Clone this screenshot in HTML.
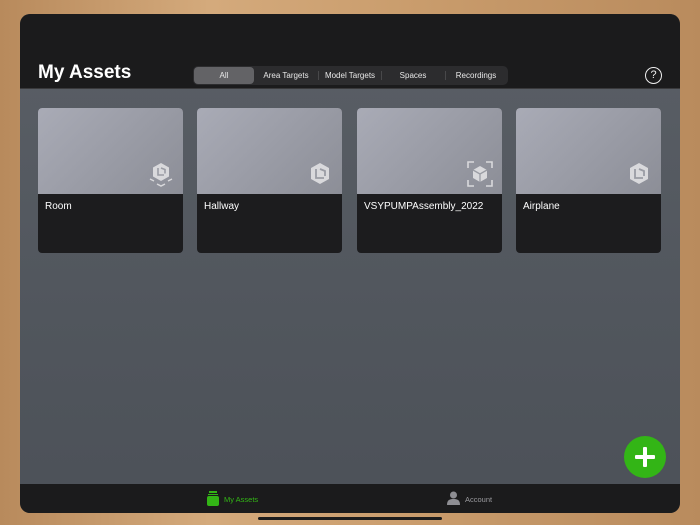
<!DOCTYPE html>
<html><head><style>
*{margin:0;padding:0;box-sizing:border-box}
body{width:700px;height:525px;overflow:hidden;background:linear-gradient(90deg,#b88a5c,#d4aa7c 30%,#c99c6c 60%,#b98b5d);font-family:"Liberation Sans",sans-serif;position:relative}
.panel{position:absolute;left:20px;top:14px;width:660px;height:499px;border-radius:10px;overflow:hidden;background:linear-gradient(180deg,#5a5f66,#51565d 60%,#4c5158)}
.hdr{position:absolute;left:0;top:0;width:660px;height:75px;background:#1b1b1c;border-bottom:1px solid #3a3a3c}
.title{position:absolute;left:18px;top:48px;color:#fff;font-weight:bold;font-size:19px}
.seg{position:absolute;left:173px;top:52px;width:315px;height:19px;background:#2c2c2e;border-radius:5px;font-size:8px;color:#e8e8e8}
.seg span{position:absolute;top:0;height:19px;line-height:19px;text-align:center}
.seg .sel{background:#636366;border-radius:4px;top:1px;height:17px;line-height:17px}
.sep{position:absolute;top:5px;width:1px;height:9px;background:#48484a}
.help{position:absolute;left:625px;top:53px;width:17px;height:17px;border:1.5px solid #eee;border-radius:50%;color:#eee;font-size:11px;text-align:center;line-height:14px}
.card{position:absolute;top:94px;width:145px;height:145px;border-radius:4px;overflow:hidden;background:#1c1c1e}
.card .img{height:86px;background:linear-gradient(135deg,#a9abb6,#8c8e97)}
.card .lbl{color:#fff;font-size:10px;position:absolute;left:7px;top:93px}
.card svg{position:absolute;right:8px;top:52px}
.tab{position:absolute;left:0;top:470px;width:660px;height:29px;background:#1b1b1c;font-size:7.5px}
.fab{position:absolute;left:604px;top:422px;width:42px;height:42px;border-radius:50%;background:#33b516}
.fab:before,.fab:after{content:"";position:absolute;background:#fff;border-radius:1px}
.fab:before{left:11px;top:19px;width:20px;height:4px}
.fab:after{left:19px;top:11px;width:4px;height:20px}
.home{position:absolute;left:258px;top:517px;width:184px;height:3px;border-radius:2px;background:#1c1c1c}
</style></head><body>
<div class="panel">
<div class="hdr">
<div class="title">My Assets</div>
<div class="seg">
<span class="sel" style="left:1px;width:60px">All</span>
<span style="left:62px;width:62px">Area Targets</span>
<div class="sep" style="left:125px"></div>
<span style="left:126px;width:62px">Model Targets</span>
<div class="sep" style="left:188px"></div>
<span style="left:189px;width:62px">Spaces</span>
<div class="sep" style="left:252px"></div>
<span style="left:252px;width:62px">Recordings</span>
</div>
<div class="help">?</div>
</div>
<div class="card" style="left:18px"><div class="img"></div><div class="lbl">Room</div>
<svg width="28" height="28" viewBox="0 0 28 28"><path d="M14 3l8 4.5v9L14 21l-8-4.5v-9z" fill="#d9d9dc"/><path d="M11 8v7h6M14 8l4 1.5v4" stroke="#9a9ca4" stroke-width="1.6" fill="none"/><path d="M3 19l4 2M25 19l-4 2M10 24l4 2 4-2" stroke="#d9d9dc" stroke-width="1.5" fill="none"/></svg></div>
<div class="card" style="left:177px"><div class="img"></div><div class="lbl">Hallway</div>
<svg width="28" height="28" viewBox="0 0 28 28"><path d="M14 3l9 5v11l-9 5-9-5V8z" fill="#d9d9dc"/><path d="M10 9v9h8M14 9l5 2v5" stroke="#9a9ca4" stroke-width="1.8" fill="none"/></svg></div>
<div class="card" style="left:337px"><div class="img"></div><div class="lbl">VSYPUMPAssembly_2022</div>
<svg width="28" height="28" viewBox="0 0 28 28"><path d="M2 8V2h6M20 2h6v6M26 20v6h-6M8 26H2v-6" stroke="#d9d9dc" stroke-width="1.6" fill="none"/><path d="M14 6l7 4v8l-7 4-7-4v-8z" fill="#d9d9dc"/><path d="M7 10l7 4 7-4M14 14v8" stroke="#9a9ca4" stroke-width="1.3" fill="none"/></svg></div>
<div class="card" style="left:496px"><div class="img"></div><div class="lbl">Airplane</div>
<svg width="28" height="28" viewBox="0 0 28 28"><path d="M14 3l9 5v11l-9 5-9-5V8z" fill="#d9d9dc"/><path d="M10 9v9h8M14 9l5 2v5" stroke="#9a9ca4" stroke-width="1.8" fill="none"/></svg></div>
<div class="fab"></div>
<div class="tab">
<div style="position:absolute;left:187px;top:7px;width:12px;height:15px">
<div style="position:absolute;left:2px;top:0;width:8px;height:1.5px;background:#33b516"></div>
<div style="position:absolute;left:1px;top:2.5px;width:10px;height:1.5px;background:#33b516"></div>
<div style="position:absolute;left:0;top:5px;width:12px;height:10px;background:#33b516;border-radius:2px"></div></div>
<div style="position:absolute;left:204px;top:11px;color:#33b516">My Assets</div>
<svg style="position:absolute;left:427px;top:7px" width="13" height="14" viewBox="0 0 13 14"><circle cx="6.5" cy="4" r="3.5" fill="#8e8e93"/><path d="M0 14c0-5 2.5-6 6.5-6s6.5 1 6.5 6z" fill="#8e8e93"/></svg>
<div style="position:absolute;left:445px;top:11px;color:#9a9a9e">Account</div>
</div>
</div>
<div class="home"></div>
</body></html>
